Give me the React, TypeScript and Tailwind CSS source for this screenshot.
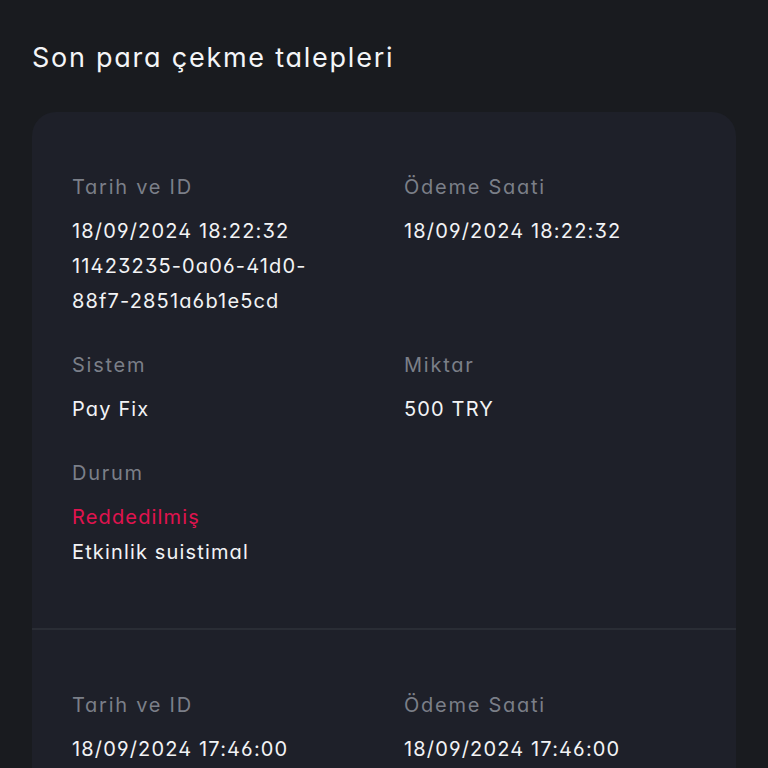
const items = [
  {
    date: "18/09/2024 18:22:32",
    id: "11423235-0a06-41d0-88f7-2851a6b1e5cd",
    paid: "18/09/2024 18:22:32",
    system: "Pay Fix",
    amount: "500 TRY",
    status: "Reddedilmiş",
    note: "Etkinlik suistimal",
  },
  {
    date: "18/09/2024 17:46:00",
    id: "a2b1c9d4-7e31-4f0a-9c52-1d7e8f3b6a20",
    paid: "18/09/2024 17:46:00",
    system: "Pay Fix",
    amount: "500 TRY",
    status: "Reddedilmiş",
    note: "Etkinlik suistimal",
  },
];

function Field({ label, children }: { label: string; children: React.ReactNode }) {
  return (
    <div>
      <p className="text-[20px] leading-[30px] tracking-[1.75px] text-[#7b7f88]">{label}</p>
      <div className="mt-[12px] text-[20px] leading-[35px] tracking-[1.15px] text-[#f2f3f5]">{children}</div>
    </div>
  );
}

export default function App() {
  return (
    <div
      className="min-h-[768px] bg-[#191b1f] px-[32px] pt-[38px] [font-feature-settings:'cv11','ss01']"
      style={{ fontFamily: "Inter, 'Noto Sans', sans-serif" }}
    >
      <h1 className="text-[27px] leading-[40px] tracking-[1.75px] text-[#f4f5f7]">Son para çekme talepleri</h1>

      <div className="mt-[34px] rounded-[24px] bg-[#1e2029] overflow-hidden">
        {items.map((it, i) => (
          <div
            key={i}
            className={`pl-[40px] pr-[24px] pt-[60px] pb-[58px] ${i > 0 ? "border-t-2 border-[#2a2d35]" : ""}`}
          >
            <div className="grid grid-cols-[332px_1fr] gap-y-[31px]">
              <Field label="Tarih ve ID">
                <p>{it.date}</p>
                <p className="w-[290px]">{it.id}</p>
              </Field>
              <Field label="Ödeme Saati">
                <p>{it.paid}</p>
              </Field>
              <Field label="Sistem">
                <p>{it.system}</p>
              </Field>
              <Field label="Miktar">
                <p>{it.amount}</p>
              </Field>
              <Field label="Durum">
                <p className="text-[#e0134f]">{it.status}</p>
                <p>{it.note}</p>
              </Field>
            </div>
          </div>
        ))}
      </div>
    </div>
  );
}
